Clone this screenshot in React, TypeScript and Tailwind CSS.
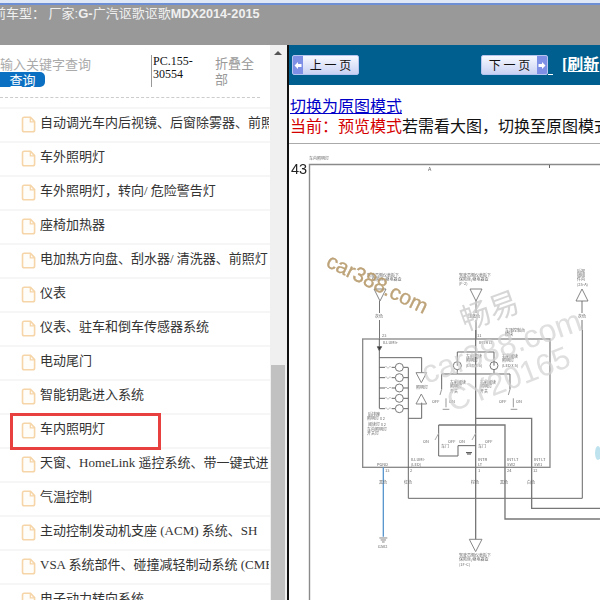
const rows = [
  "自动调光车内后视镜、后窗除雾器、前照灯",
  "车外照明灯",
  "车外照明灯，转向/ 危险警告灯",
  "座椅加热器",
  "电加热方向盘、刮水器/ 清洗器、前照灯",
  "仪表",
  "仪表、驻车和倒车传感器系统",
  "电动尾门",
  "智能钥匙进入系统",
  "车内照明灯",
  "天窗、HomeLink 遥控系统、带一键式进入",
  "气温控制",
  "主动控制发动机支座 (ACM) 系统、SH",
  "VSA 系统部件、碰撞减轻制动系统 (CMBS)",
  "电子动力转向系统",
];

const serifCjk = "font-['Liberation_Serif','Noto_Sans_CJK_SC',serif]";

function FileIcon() {
  return (
    <svg width="15" height="17" viewBox="0 0 15 17" className="shrink-0" fill="none">
      <path d="M1.5 3 Q1.5 1.2 3.2 1.2 H9.5 L13.6 5.6 V14 Q13.6 15.8 11.8 15.8 H3.2 Q1.5 15.8 1.5 14 Z" fill="#fffdf9" stroke="#f6d5a8" strokeWidth="1.6" />
      <path d="M9.3 1.5 V5.8 H13.4" stroke="#f6d5a8" strokeWidth="1.3" />
    </svg>
  );
}

function Arrow({ dir }: { dir: "l" | "r" }) {
  return (
    <span className="flex h-full w-[10px] items-center justify-center bg-[#7e90e6]">
      <svg width="8" height="9" viewBox="0 0 8 9">
        <path d={dir === "l" ? "M0.5 4.5 L4 1 V3 H7.5 V6 H4 V8 Z" : "M7.5 4.5 L4 1 V3 H0.5 V6 H4 V8 Z"} fill="#fff" />
      </svg>
    </span>
  );
}

function PageBtn({ label, dir, w }: { label: string; dir: "l" | "r"; w: string }) {
  return (
    <div className={`flex h-[20px] ${w} items-center overflow-hidden rounded-[2px] border border-[#b6c4ee] bg-gradient-to-b from-[#f8f9ff] to-[#c9d2f3] text-[12px] text-[#111] font-['Noto_Sans_CJK_SC',sans-serif]`}>
      {dir === "l" && <Arrow dir="l" />}
      <span className="flex-1 text-center whitespace-pre">{label}</span>
      {dir === "r" && <Arrow dir="r" />}
    </div>
  );
}

function Tiny({ x, y, t, s = 4 }: { x: number; y: number; t: string; s?: number }) {
  return <text x={x} y={y} fontSize={s} fill="#666" fontFamily="'Noto Sans CJK SC', sans-serif">{t}</text>;
}

const labels: [number, number, string][] = [
  [367, 277, "驾驶员侧仪表板下"], [372, 281, "保险丝/继电器盒"],
  [459, 277, "驾驶员侧仪表板下"], [459, 281, "保险丝/继电器盒"], [459, 285, "(F-2)"],
  [577, 273, "后视"], [577, 277, "镜组"], [577, 281, "件内"], [577, 286, "(25-A)"],
  [375, 318, "灰色"], [468, 318, "浅蓝色"], [578, 318, "灰色"],
  [505, 332, "车顶控制台"], [505, 336, "模块"], [382, 337, "23"], [477, 337, "11"],
  [383, 344, "ILLUMI+"], [479, 344, "INTR LT"],
  [466, 358, "左前阅读"], [466, 362, "照明灯"], [466, 367, "(LED x 5)"],
  [502, 358, "右前阅读"], [502, 362, "照明灯"], [502, 367, "(LED x 5)"],
  [450, 384, "左前阅读"], [450, 388, "照明灯"], [450, 393, "开关"],
  [480, 384, "右前阅读"], [480, 388, "照明灯"], [480, 393, "开关"],
  [416, 389, "照明灯"],
  [432, 403, "OFF"], [449, 403, "ON"], [499, 403, "OFF"], [516, 403, "ON"],
  [423, 443, "ON"], [448, 443, "OFF"], [459, 443, "ON"], [485, 443, "OFF"],
  [441, 448, "车门"], [478, 448, "车门"],
  [368, 416, "后排座"], [367, 420, "照明灯 x 2"], [368, 426, "阅读灯 x 2"], [367, 431, "车内照明灯"], [367, 435, "开关灯"],
  [377, 466, "PGND"], [411, 461, "ILLUMI-"], [411, 466, "(LED)"], [478, 461, "INTR"], [478, 466, "LT"],
  [507, 461, "INT LT"], [507, 466, "SW2"], [534, 461, "INT LT"], [534, 466, "SW1"],
  [385, 472, "13"], [410, 472, "2"], [478, 472, "1"], [507, 472, "24"], [533, 472, "12"],
  [379, 484, "黑色"], [404, 484, "红色"], [471, 484, "棕色"], [500, 484, "黑色"], [527, 484, "白色"],
  [378, 548, "G502"],
  [459, 557, "驾驶员侧仪表板下"], [459, 561, "保险丝/继电器盒"], [459, 566, "(1F-C)"],
];

function Diagram() {
  const lampYs = [112, 143, 174, 205, 236];
  return (
    <svg width="311" height="456" viewBox="289 144 311 456" className="block blur-[0.45px]">
      {/* frame */}
      <path d="M309.5 600 V164.5 H600" fill="none" stroke="#8a8a8a" strokeWidth="1.4" />
      <text x="291" y="174" fontSize="14.5" fill="#222" fontFamily="'Liberation Sans', sans-serif">43</text>
      <Tiny x={309} y={160} t="车内照明灯" />
      <text x="428" y="171" fontSize="5" fill="#555" fontFamily="'Liberation Sans', sans-serif">A</text>
      <path d="M549.5 165 V168" stroke="#666" strokeWidth="1" />

      {/* upper feeds */}
      <g fill="none" stroke="#777" strokeWidth="0.9">
        <path d="M374 289 H386 L380 301 Z" />
        <path d="M470 289 H482 L476 301 Z" />
        <path d="M582 289 L576 301 H588 Z" />
      </g>
      <path d="M379.5 301 V313 M379.5 320 V339 M476 301 V313 M476 320 V339 M582 301 V313 M582 320 V330" stroke="#666" strokeWidth="0.9" fill="none" />

      {/* main schematic, traced at 3x */}
      <g transform="translate(340 330) scale(0.3333)" fill="none" stroke="#666" strokeWidth="3">
        <rect x="68" y="27" width="562" height="385" stroke="#8a8a8a" strokeWidth="4" />
        <path d="M118 27 V235" />
        <path d="M112 50 H125 L118 62 Z" fill="#333" />
        <path d="M118 83 H245 V128 M245 218 V265 H205 M205 113 V505 H727 V0" />
        <path d="M228 128 H260 L244 158 Z" stroke="#888" />
        <path d="M228 222 H260 L244 192 Z" stroke="#888" />
        {lampYs.map((y) => (
          <g key={y}>
            <path d={`M118 ${y} H135 M155 ${y} H165 M190 ${y} H205`} />
            <path d={`M135 ${y} q3 -6 6 0 q3 6 6 0 q3 -6 6 0`} strokeWidth="2" stroke="#999" />
            <circle cx="178" cy={y} r="12" stroke="#777" />
          </g>
        ))}
        <path d="M407 0 V628" strokeWidth="4" stroke="#777" />
        <path d="M352 107 V66 H462 V107 M352 119 V132 H462 V119" />
        <circle cx="352" cy="107" r="12" stroke="#777" />
        <circle cx="462" cy="107" r="12" stroke="#777" />
        <path d="M305 132 V178 M510 132 V178 M305 132 H352 M462 132 H510" />
        <path d="M305 178 L300 195 M510 178 L505 195 M318 205 V232 M520 205 V232" stroke="#999" />
        <path d="M308 238 H328 M512 238 H532" stroke="#999" />
        <path d="M407 265 H575 V535 H780" strokeWidth="4" stroke="#777" />
        <path d="M296 285 H495 V567 H780" strokeWidth="4" stroke="#777" />
        <path d="M296 285 V378 H354 V347 H407" />
        <path d="M296 310 L285 330 M407 310 L396 330" stroke="#aaa" />
        <path d="M378 368 H396 M381 372 H393" stroke="#444" />
        <path d="M130 412 V620" stroke="#5a97cf" strokeWidth="4" />
        <path d="M118 624 H142 M122 630 H138 M126 636 H134" stroke="#888" />
        <path d="M388 628 H426 L407 665 Z" stroke="#888" />
      </g>
      {labels.map(([x, y, t], i) => (
        <Tiny key={i} x={x} y={y} t={t} />
      ))}

      {/* watermarks */}
      <text x="0" y="0" transform="translate(325 266) rotate(26)" fontSize="21" fontWeight="400" stroke="#b79a6c" strokeWidth="0.3" fill="#b79a6c" fillOpacity="0.9" fontFamily="'Liberation Sans', sans-serif">car388.com</text>
      <text x="0" y="0" transform="translate(465 331) rotate(-20)" fontSize="30" fill="#cccccc" fillOpacity="0.8" fontFamily="'Noto Sans CJK SC', sans-serif">畅易</text>
      <text x="0" y="0" transform="translate(426 384) rotate(-19)" fontSize="32" fill="#d2d2d2" fillOpacity="0.7" fontFamily="'Liberation Sans', sans-serif">car388.com</text>
      <text x="0" y="0" transform="translate(452 412) rotate(-21)" fontSize="31" fill="#d2d2d2" fillOpacity="0.7" fontFamily="'Liberation Sans', sans-serif">CY20165</text>
      <ellipse cx="598" cy="453" rx="3" ry="7" fill="#bfe3ee" />
    </svg>
  );
}

export default function App() {
  return (
    <div className="relative flex h-[600px] w-[600px] flex-col overflow-hidden bg-white">
      {/* title strip */}
      <div className="h-[3px] shrink-0 bg-[#dfe8f6]" />
      <div className="h-[2px] shrink-0 bg-[#6d8fd6]" />
      <div className="h-[40px] shrink-0 overflow-hidden bg-[#999999]">
        <div className="-ml-[20px] whitespace-pre text-[13px] leading-[18px] text-[#f0f0f0] font-['Liberation_Sans','Noto_Sans_CJK_SC',sans-serif]">
          当前车型： 厂家:<span className="font-bold">G-</span>广汽讴歌讴歌<span className="text-[12.7px] font-bold">MDX2014-2015</span>
        </div>
      </div>

      <div className="flex min-h-0 flex-1">
        {/* left panel */}
        <div className="flex w-[287px] shrink-0">
          <div className="w-[270px] shrink-0 overflow-hidden">
            <div className="flex h-[52px] items-start">
              <div className="w-[151px] shrink-0 overflow-hidden">
                <div className="mt-[11px] whitespace-nowrap text-[13px] leading-[16px] text-[#aaaaaa] font-['Noto_Sans_CJK_SC',sans-serif]">输入关键字查询</div>
                <div className="-ml-[6px] flex h-[15px] w-[51px] items-center justify-center rounded-[5px] bg-[#0b6fc2] text-[13px] leading-none text-white font-['Noto_Sans_CJK_SC',sans-serif]">
                  <span className="ml-[6px]">查询</span>
                </div>
              </div>
              <div className="mt-[10px] h-[32px] w-[65px] shrink-0 border-l border-[#999] pl-[1px] text-[12px] leading-[13px] text-[#111] font-['Liberation_Serif',serif]">
                PC.155-<br />30554
              </div>
              <div className="mt-[10px] w-[40px] shrink-0 -translate-x-px text-[13px] leading-[16px] text-[#999] font-['Noto_Sans_CJK_SC',sans-serif]">折叠全部</div>
            </div>
            <div className="w-[260px] border-t border-dashed border-[#cccccc]" />
            <div className="mt-[9px] w-[270px]">
              {rows.map((t) => (
                <div key={t} className="flex h-[34px] w-[270px] items-center border-t-2 border-[#f6f6f6] pb-[2px]">
                  <div className="flex w-[248px] items-center pl-[21px]">
                    <FileIcon />
                    <span className={`mb-[2px] ml-[4px] w-[229px] shrink-0 overflow-hidden whitespace-nowrap text-[13px] leading-[16px] text-[#333] ${serifCjk}`}>{t}</span>
                  </div>
                </div>
              ))}
            </div>
          </div>
          {/* scrollbar */}
          <div className="flex w-[17px] shrink-0 flex-col bg-[#f0f0f0] pl-[1px] pr-[2px]">
            <div className="flex h-[16px] shrink-0 items-center justify-center">
              <div className="h-0 w-0 border-x-[4px] border-b-[4px] border-x-transparent border-b-[#555]" />
            </div>
            <div className="flex-1" />
            <div className="h-[235px] shrink-0 bg-[#c1c1c1]" />
          </div>
        </div>
        <div className="w-[2px] shrink-0 bg-[#111]" />

        {/* right panel */}
        <div className="min-w-0 flex-1 overflow-hidden">
          <div className="flex h-[40px] items-center bg-[#005f8e] pl-[3px]">
            <PageBtn label="上 一 页" dir="l" w="w-[67px]" />
            <div className="ml-[122px]"><PageBtn label="下 一 页" dir="r" w="w-[67px]" /></div>
            <div className="mt-[18px] h-px w-[5px] shrink-0 bg-white" />
            <span className="ml-[9px] whitespace-nowrap text-[16px] font-bold leading-[20px] text-white underline font-['Liberation_Serif','Noto_Sans_CJK_SC',serif]">[刷新</span>
          </div>
          <div className="whitespace-nowrap pl-[1px] pt-[10px] text-[16px] leading-[20px] font-['Noto_Sans_CJK_SC',sans-serif]">
            <div className="text-[#0000c8] underline">切换为原图模式</div>
            <div className="text-[#111]"><span className="text-[#d40000]">当前：预览模式</span>若需看大图，切换至原图模式</div>
          </div>
          <div className="mt-[8px] h-px bg-[#aaaaaa]" />
          <Diagram />
        </div>
      </div>

      {/* highlight box drawn over the list */}
      <div className="absolute left-[10px] top-[413px] h-[37px] w-[151px] border-[3px] border-[#e8403f]" />
    </div>
  );
}
